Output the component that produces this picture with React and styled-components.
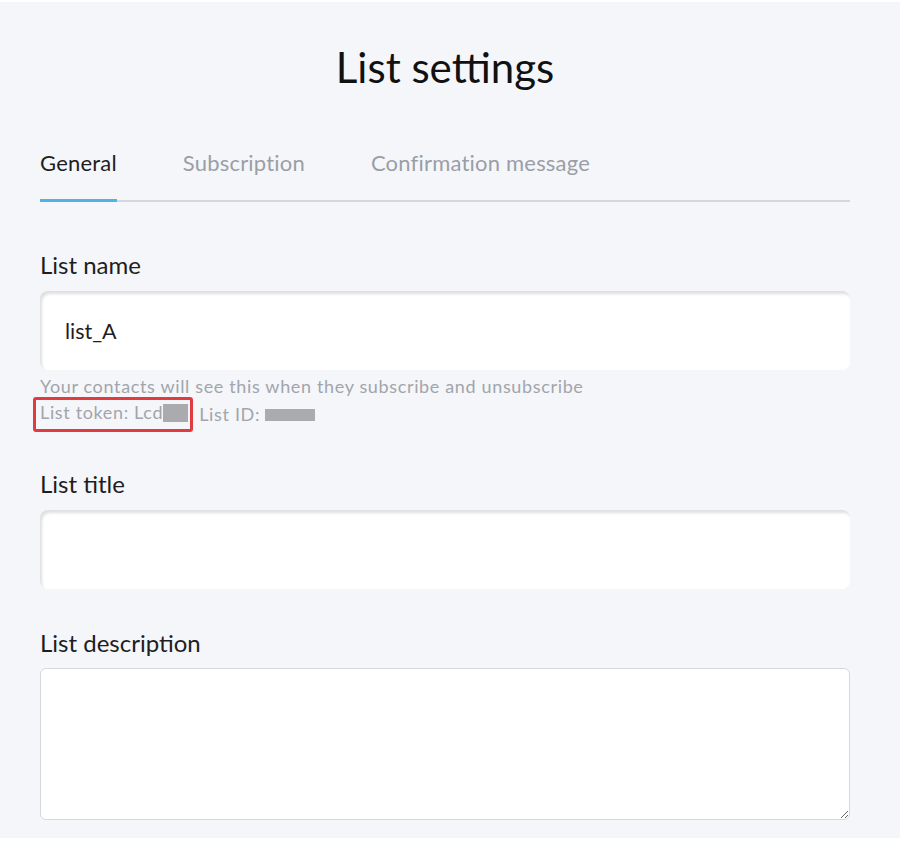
import React from "react";
import styled, { createGlobalStyle } from "styled-components";

const GlobalStyle = createGlobalStyle`
  html, body {
    margin: 0;
    padding: 0;
    background: #ffffff;
  }
  body {
    font-family: Lato, "Noto Sans", sans-serif;
  }
`;

const Panel = styled.div`
  width: 900px;
  height: 836px;
  margin-top: 2px;
  background: #f5f6fa;
  box-sizing: border-box;
  padding: 37px 50px 0 40px;
`;

const Title = styled.h1`
  margin: 0;
  height: 56px;
  line-height: 56px;
  text-align: center;
  font-size: 42px;
  font-weight: 400;
  color: #111;
`;

const Tabs = styled.div`
  display: flex;
  gap: 66px;
  margin-top: 54px;
  border-bottom: 2px solid #d3d8e0;
`;

const Tab = styled.div`
  position: relative;
  font-size: 22px;
  letter-spacing: 0.2px;
  line-height: 28px;
  padding-bottom: 23px;
  color: ${(p) => (p.active ? "#1e1e1e" : "#9a9ea6")};
  &::after {
    content: "";
    display: ${(p) => (p.active ? "block" : "none")};
    position: absolute;
    left: 0;
    right: 0;
    bottom: -2px;
    height: 3px;
    background: #52b3e2;
  }
`;

const Field = styled.div`
  display: flex;
  flex-direction: column;
  margin-top: ${(p) => p.top}px;
`;

const Label = styled.label`
  font-size: 24px;
  line-height: 28px;
  color: #1e1e1e;
  margin-bottom: ${(p) => p.gap || 12}px;
`;

const TextInput = styled.div`
  height: 79px;
  box-sizing: border-box;
  background: #ffffff;
  border-radius: 8px;
  box-shadow: inset 2px 3px 3px rgba(0, 0, 0, 0.13);
  padding: 0 25px;
  display: flex;
  align-items: center;
  font-size: 21.5px;
  color: #1e1e1e;
`;

const Help = styled.div`
  font-size: 18px;
  letter-spacing: 0.65px;
  line-height: 25px;
  color: #a1a5ab;
  margin-top: 4px;
`;

const TokenRow = styled.div`
  display: flex;
  align-items: center;
  margin-top: -2px;
  font-size: 18px;
  letter-spacing: 0.65px;
  line-height: 25px;
  color: #a1a5ab;
`;

const Highlight = styled.span`
  display: inline-flex;
  align-items: center;
  margin-left: -7px;
  padding: 0 2px 4px 4px;
  border: 3px solid #df3b40;
  border-radius: 3px;
`;

const Redacted = styled.span`
  display: inline-block;
  width: ${(p) => p.w}px;
  height: ${(p) => p.h}px;
  background: #a9abae;
  margin-left: ${(p) => p.gap || 0}px;
`;

const IdLabel = styled.span`
  margin-left: 6px;
`;

const TextArea = styled.textarea`
  height: 152px;
  box-sizing: border-box;
  background: #ffffff;
  border: 1px solid #d6d8dc;
  border-radius: 6px;
  resize: vertical;
  font-family: inherit;
  font-size: 18px;
  outline: none;
`;

export default function App() {
  return (
    <>
      <GlobalStyle />
      <Panel>
        <Title>List settings</Title>
        <Tabs>
          <Tab active>General</Tab>
          <Tab>Subscription</Tab>
          <Tab>Confirmation message</Tab>
        </Tabs>
        <Field top={49}>
          <Label>List name</Label>
          <TextInput>list_A</TextInput>
          <Help>Your contacts will see this when they subscribe and unsubscribe</Help>
          <TokenRow>
            <Highlight>
              List token: Lcd
              <Redacted w={25} h={18} />
            </Highlight>
            <IdLabel>List ID:</IdLabel>
            <Redacted w={50} h={12} gap={5} />
          </TokenRow>
        </Field>
        <Field top={38}>
          <Label>List title</Label>
          <TextInput />
        </Field>
        <Field top={40}>
          <Label gap={11}>List description</Label>
          <TextArea />
        </Field>
      </Panel>
    </>
  );
}
